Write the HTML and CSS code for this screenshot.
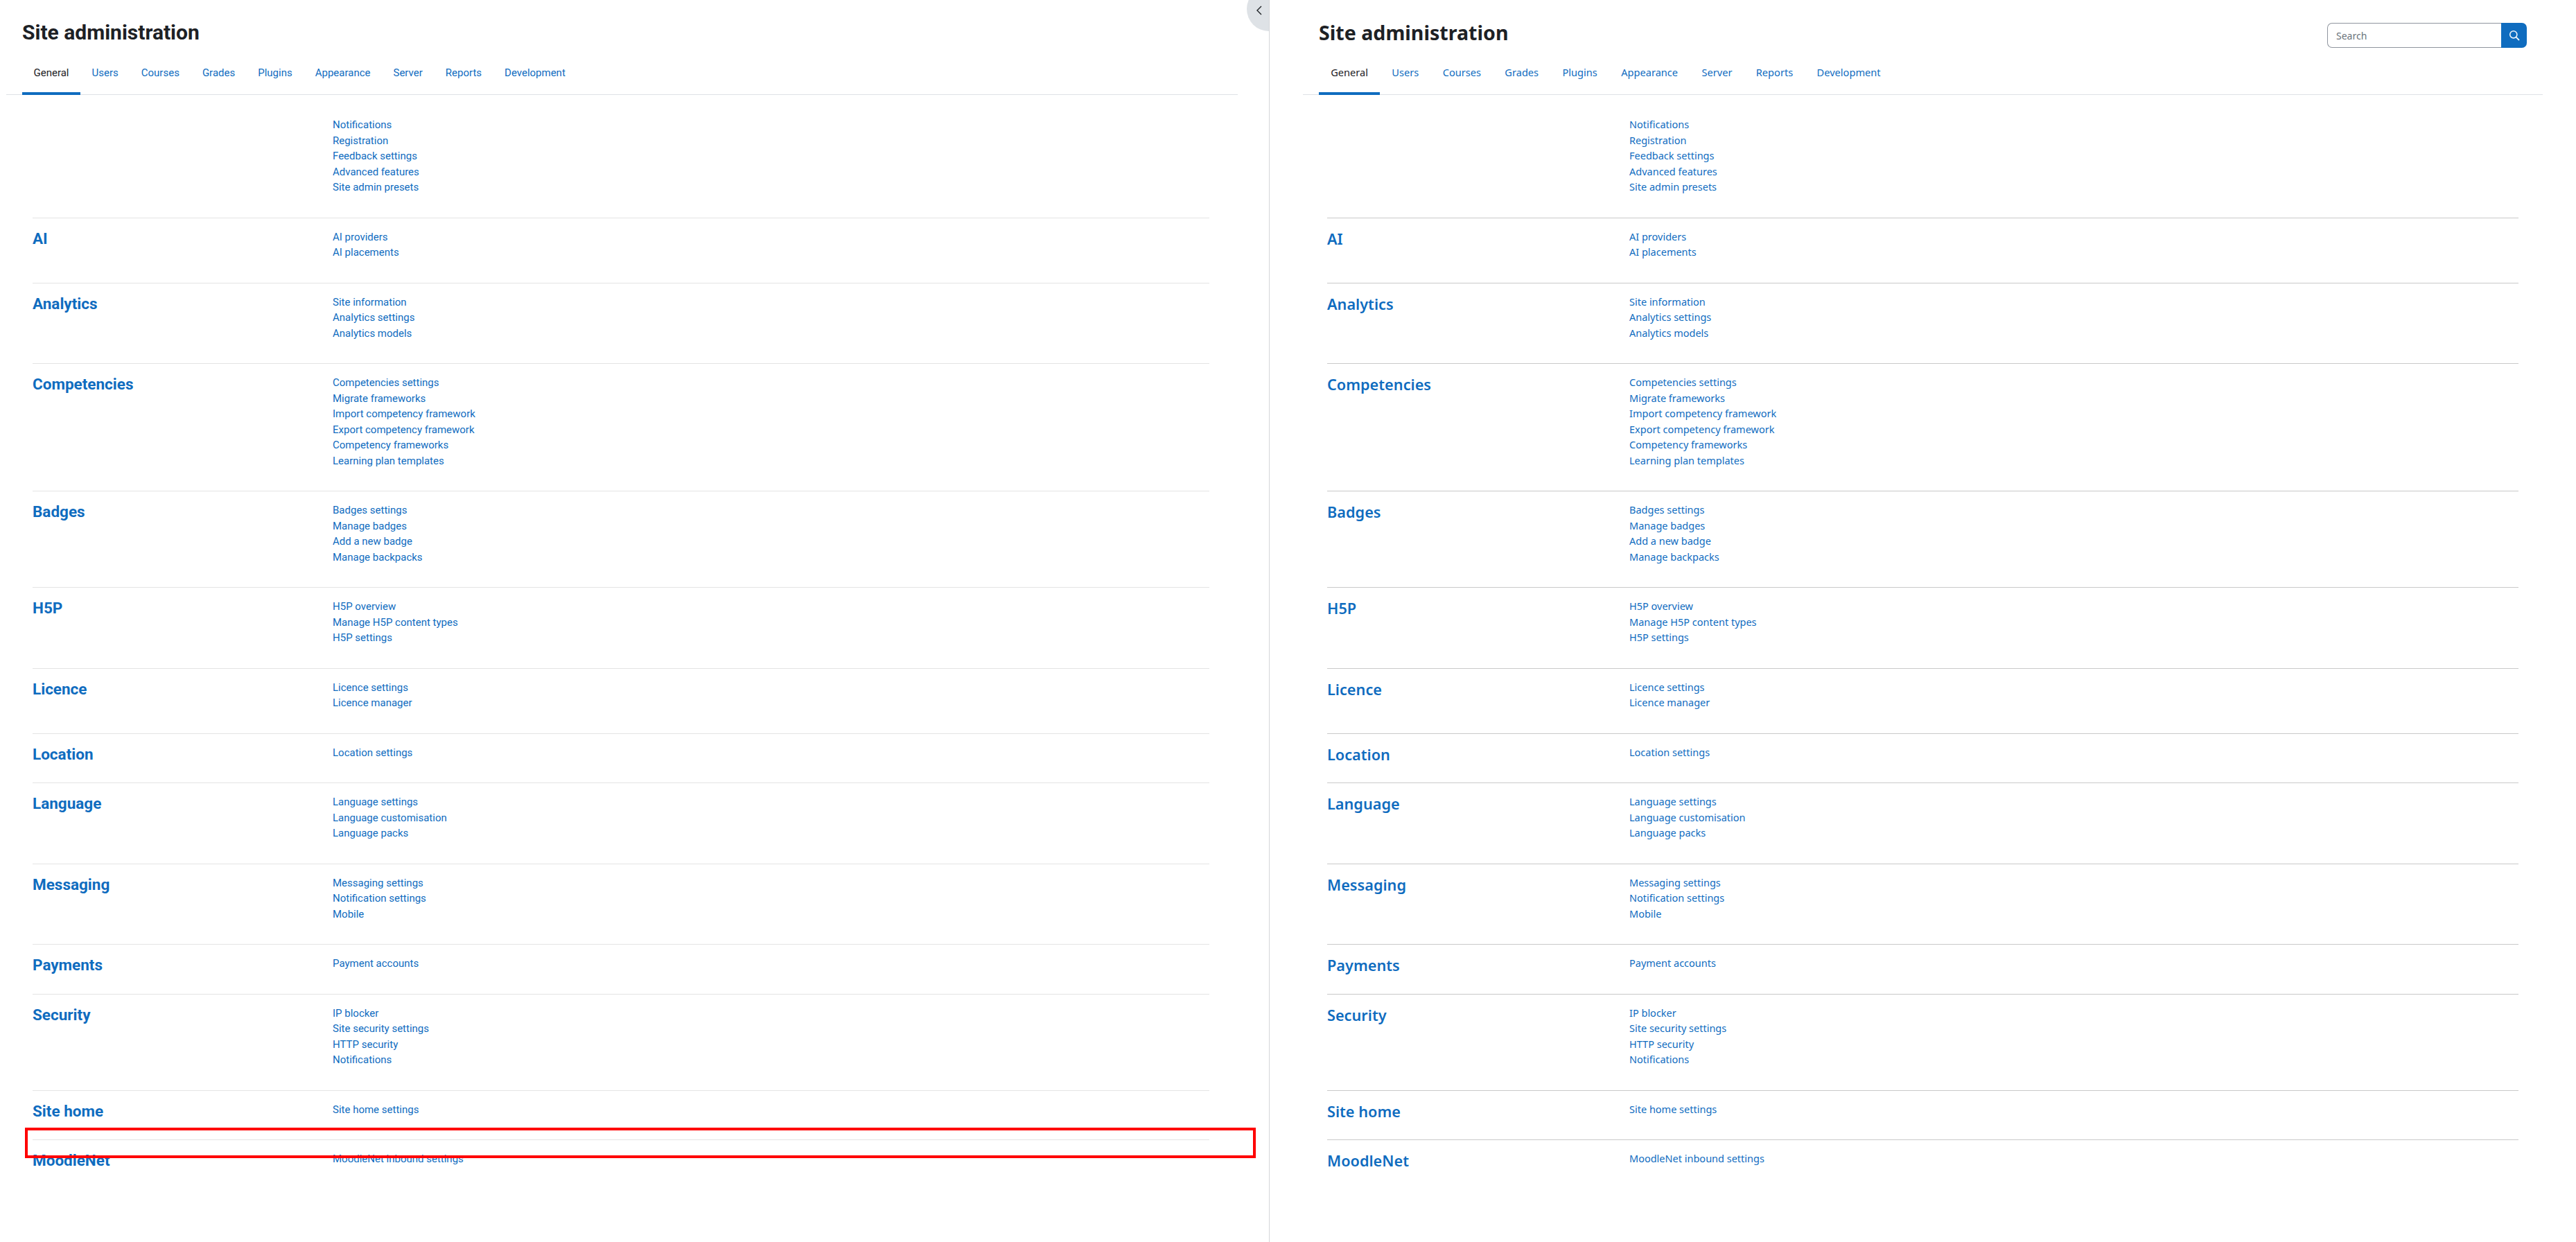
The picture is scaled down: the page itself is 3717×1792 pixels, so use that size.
FILE: index.html
```html
<!DOCTYPE html>
<html lang="en">
<head>
    <meta charset="UTF-8">
    <meta name="viewport" content="width=device-width, initial-scale=1.0">
    <title>Site administration</title>
    <link rel="stylesheet" href="styles.css">
</head>
<body>

    <!-- Left pane (Roboto) -->
    <div class="pane pane-left">
        <div class="page-head">
            <h2>Site administration</h2>
        </div>
        <div class="tabs">
            <a class="tab active" href="#">General</a>
            <a class="tab" href="#">Users</a>
            <a class="tab" href="#">Courses</a>
            <a class="tab" href="#">Grades</a>
            <a class="tab" href="#">Plugins</a>
            <a class="tab" href="#">Appearance</a>
            <a class="tab" href="#">Server</a>
            <a class="tab" href="#">Reports</a>
            <a class="tab" href="#">Development</a>
        </div>
        <div class="sections">
            <div class="section first">
                <h3></h3>
                <ul>
                    <li><a href="#">Notifications</a></li>
                    <li><a href="#">Registration</a></li>
                    <li><a href="#">Feedback settings</a></li>
                    <li><a href="#">Advanced features</a></li>
                    <li><a href="#">Site admin presets</a></li>
                </ul>
            </div>
            <div class="section">
                <h3><a href="#">AI</a></h3>
                <ul>
                    <li><a href="#">AI providers</a></li>
                    <li><a href="#">AI placements</a></li>
                </ul>
            </div>
            <div class="section">
                <h3><a href="#">Analytics</a></h3>
                <ul>
                    <li><a href="#">Site information</a></li>
                    <li><a href="#">Analytics settings</a></li>
                    <li><a href="#">Analytics models</a></li>
                </ul>
            </div>
            <div class="section">
                <h3><a href="#">Competencies</a></h3>
                <ul>
                    <li><a href="#">Competencies settings</a></li>
                    <li><a href="#">Migrate frameworks</a></li>
                    <li><a href="#">Import competency framework</a></li>
                    <li><a href="#">Export competency framework</a></li>
                    <li><a href="#">Competency frameworks</a></li>
                    <li><a href="#">Learning plan templates</a></li>
                </ul>
            </div>
            <div class="section">
                <h3><a href="#">Badges</a></h3>
                <ul>
                    <li><a href="#">Badges settings</a></li>
                    <li><a href="#">Manage badges</a></li>
                    <li><a href="#">Add a new badge</a></li>
                    <li><a href="#">Manage backpacks</a></li>
                </ul>
            </div>
            <div class="section">
                <h3><a href="#">H5P</a></h3>
                <ul>
                    <li><a href="#">H5P overview</a></li>
                    <li><a href="#">Manage H5P content types</a></li>
                    <li><a href="#">H5P settings</a></li>
                </ul>
            </div>
            <div class="section">
                <h3><a href="#">Licence</a></h3>
                <ul>
                    <li><a href="#">Licence settings</a></li>
                    <li><a href="#">Licence manager</a></li>
                </ul>
            </div>
            <div class="section">
                <h3><a href="#">Location</a></h3>
                <ul>
                    <li><a href="#">Location settings</a></li>
                </ul>
            </div>
            <div class="section">
                <h3><a href="#">Language</a></h3>
                <ul>
                    <li><a href="#">Language settings</a></li>
                    <li><a href="#">Language customisation</a></li>
                    <li><a href="#">Language packs</a></li>
                </ul>
            </div>
            <div class="section">
                <h3><a href="#">Messaging</a></h3>
                <ul>
                    <li><a href="#">Messaging settings</a></li>
                    <li><a href="#">Notification settings</a></li>
                    <li><a href="#">Mobile</a></li>
                </ul>
            </div>
            <div class="section">
                <h3><a href="#">Payments</a></h3>
                <ul>
                    <li><a href="#">Payment accounts</a></li>
                </ul>
            </div>
            <div class="section">
                <h3><a href="#">Security</a></h3>
                <ul>
                    <li><a href="#">IP blocker</a></li>
                    <li><a href="#">Site security settings</a></li>
                    <li><a href="#">HTTP security</a></li>
                    <li><a href="#">Notifications</a></li>
                </ul>
            </div>
            <div class="section">
                <h3><a href="#">Site home</a></h3>
                <ul>
                    <li><a href="#">Site home settings</a></li>
                </ul>
            </div>
            <div class="section">
                <h3><a href="#">MoodleNet</a></h3>
                <ul>
                    <li><a href="#">MoodleNet inbound settings</a></li>
                </ul>
            </div>
        </div>
        <button class="collapse-btn" aria-label="Collapse">
            <svg width="8" height="14" viewBox="0 0 8 14"><path d="M7 1 1 7l6 6" fill="none" stroke="#1d2125" stroke-width="1.4"/></svg>
        </button>
    </div>

    <!-- Right pane (Ubuntu-like) -->
    <div class="pane pane-right">
        <div class="page-head">
            <h2>Site administration</h2>
            <form class="search">
                <input type="text" placeholder="Search">
                <button type="button" aria-label="Search">
                    <svg width="16" height="16" viewBox="0 0 16 16"><circle cx="6.8" cy="6.8" r="5.1" fill="none" stroke="#eef4fa" stroke-width="1.6"/><path d="M10.6 10.6 15 15" stroke="#eef4fa" stroke-width="1.8"/></svg>
                </button>
            </form>
        </div>
        <div class="tabs">
            <a class="tab active" href="#">General</a>
            <a class="tab" href="#">Users</a>
            <a class="tab" href="#">Courses</a>
            <a class="tab" href="#">Grades</a>
            <a class="tab" href="#">Plugins</a>
            <a class="tab" href="#">Appearance</a>
            <a class="tab" href="#">Server</a>
            <a class="tab" href="#">Reports</a>
            <a class="tab" href="#">Development</a>
        </div>
        <div class="sections">
            <div class="section first">
                <h3></h3>
                <ul>
                    <li><a href="#">Notifications</a></li>
                    <li><a href="#">Registration</a></li>
                    <li><a href="#">Feedback settings</a></li>
                    <li><a href="#">Advanced features</a></li>
                    <li><a href="#">Site admin presets</a></li>
                </ul>
            </div>
            <div class="section">
                <h3><a href="#">AI</a></h3>
                <ul>
                    <li><a href="#">AI providers</a></li>
                    <li><a href="#">AI placements</a></li>
                </ul>
            </div>
            <div class="section">
                <h3><a href="#">Analytics</a></h3>
                <ul>
                    <li><a href="#">Site information</a></li>
                    <li><a href="#">Analytics settings</a></li>
                    <li><a href="#">Analytics models</a></li>
                </ul>
            </div>
            <div class="section">
                <h3><a href="#">Competencies</a></h3>
                <ul>
                    <li><a href="#">Competencies settings</a></li>
                    <li><a href="#">Migrate frameworks</a></li>
                    <li><a href="#">Import competency framework</a></li>
                    <li><a href="#">Export competency framework</a></li>
                    <li><a href="#">Competency frameworks</a></li>
                    <li><a href="#">Learning plan templates</a></li>
                </ul>
            </div>
            <div class="section">
                <h3><a href="#">Badges</a></h3>
                <ul>
                    <li><a href="#">Badges settings</a></li>
                    <li><a href="#">Manage badges</a></li>
                    <li><a href="#">Add a new badge</a></li>
                    <li><a href="#">Manage backpacks</a></li>
                </ul>
            </div>
            <div class="section">
                <h3><a href="#">H5P</a></h3>
                <ul>
                    <li><a href="#">H5P overview</a></li>
                    <li><a href="#">Manage H5P content types</a></li>
                    <li><a href="#">H5P settings</a></li>
                </ul>
            </div>
            <div class="section">
                <h3><a href="#">Licence</a></h3>
                <ul>
                    <li><a href="#">Licence settings</a></li>
                    <li><a href="#">Licence manager</a></li>
                </ul>
            </div>
            <div class="section">
                <h3><a href="#">Location</a></h3>
                <ul>
                    <li><a href="#">Location settings</a></li>
                </ul>
            </div>
            <div class="section">
                <h3><a href="#">Language</a></h3>
                <ul>
                    <li><a href="#">Language settings</a></li>
                    <li><a href="#">Language customisation</a></li>
                    <li><a href="#">Language packs</a></li>
                </ul>
            </div>
            <div class="section">
                <h3><a href="#">Messaging</a></h3>
                <ul>
                    <li><a href="#">Messaging settings</a></li>
                    <li><a href="#">Notification settings</a></li>
                    <li><a href="#">Mobile</a></li>
                </ul>
            </div>
            <div class="section">
                <h3><a href="#">Payments</a></h3>
                <ul>
                    <li><a href="#">Payment accounts</a></li>
                </ul>
            </div>
            <div class="section">
                <h3><a href="#">Security</a></h3>
                <ul>
                    <li><a href="#">IP blocker</a></li>
                    <li><a href="#">Site security settings</a></li>
                    <li><a href="#">HTTP security</a></li>
                    <li><a href="#">Notifications</a></li>
                </ul>
            </div>
            <div class="section">
                <h3><a href="#">Site home</a></h3>
                <ul>
                    <li><a href="#">Site home settings</a></li>
                </ul>
            </div>
            <div class="section">
                <h3><a href="#">MoodleNet</a></h3>
                <ul>
                    <li><a href="#">MoodleNet inbound settings</a></li>
                </ul>
            </div>
        </div>
    </div>

    <!-- Red highlight drawn over the page -->
    <div class="highlight"></div>

</body>
</html>
```

FILE: styles.css
```css
html, body {
    height: 100%;
}
body {
    margin: 0;
    display: flex;
    background: #fff;
    color: #1d2125;
    overflow: hidden;
    position: relative;
}
a {
    color: #0f6cbf;
    text-decoration: none;
}
.pane {
    box-sizing: border-box;
    position: relative;
    font-size: 15px;
    line-height: 22.5px;
}
.pane-left {
    width: 1832px;
    flex: none;
    padding: 0 45px 0 9px;
    border-right: 1px solid #d4d6d9;
    font-family: Roboto, sans-serif;
}
.pane-right {
    flex: 1;
    padding: 0 48px;
    font-family: "Noto Sans", sans-serif;
}
.page-head {
    height: 73px;
    display: flex;
    justify-content: space-between;
    padding-left: 23px;
}
h2 {
    margin: 30px 0 0;
    font-size: 30px;
    line-height: 34px;
    font-weight: 700;
}
.pane-right h2 {
    font-size: 28.6px;
}

/* Tabs */
.tabs {
    display: flex;
    padding-left: 23px;
    border-bottom: 1px solid #dee2e6;
    height: 64px;
    box-sizing: border-box;
}
.tab {
    padding: 21px 16.5px 0;
    height: 64px;
    box-sizing: border-box;
}
.pane-right .tab {
    padding: 20px 17.2px 0;
    font-size: 14.6px;
}
.tab.active {
    color: #1d2125;
    border-bottom: 4px solid #0f6cbf;
}

/* Sections */
.sections {
    padding: 32px 41px 0 38px;
}
.pane-right .sections {
    padding: 32px 35px 0 35px;
}
.section {
    display: grid;
    grid-template-columns: 433px 1fr;
    padding: 16px 0 32px;
    border-top: 1px solid #e4e4e4;
}
.pane-right .section {
    grid-template-columns: 436px 1fr;
    border-top-color: #c9c9c9;
}
.section.first {
    border-top: none;
    padding-top: 0;
}
.section h3 {
    margin: 0 0 -5px;
    font-size: 22.5px;
    line-height: 27px;
    font-weight: 700;
}
.pane-right .section h3 {
    font-weight: 600;
    font-size: 21.7px;
    line-height: 29px;
    margin: -1px 0 -6px;
}
.section ul {
    list-style: none;
    margin: 0;
    padding: 0;
}
.pane-right .section ul {
    margin: -1px 0 1px;
}
.pane-right .section li {
    font-size: 14.5px;
}

/* Drawer toggle */
.collapse-btn {
    position: absolute;
    top: -19px;
    right: 0;
    width: 32px;
    height: 64px;
    padding: 27px 0 0 14px;
    border: none;
    background: #dee2e6;
    border-radius: 32px 0 0 32px;
    display: flex;
    align-items: flex-start;
}
.collapse-btn svg {
    display: block;
}

/* Search box */
.search {
    display: flex;
    width: 288px;
    height: 36px;
    margin: 33px 23px 0 0;
}
.search input {
    flex: 1;
    min-width: 0;
    box-sizing: border-box;
    padding: 0 12px;
    border: 1px solid #8f959e;
    border-right: none;
    border-radius: 7px 0 0 7px;
    font-family: "Noto Sans", sans-serif;
    font-size: 14px;
    outline: none;
}
.search input::placeholder {
    color: #6a737b;
}
.search button {
    width: 37px;
    padding: 0;
    border: none;
    border-radius: 0 7px 7px 0;
    background: #0f6cbf;
    display: flex;
    align-items: center;
    justify-content: center;
}

/* Red annotation */
.highlight {
    position: absolute;
    left: 36px;
    top: 1627px;
    width: 1776px;
    height: 44px;
    box-sizing: border-box;
    border: 4px solid #f00;
}
```
